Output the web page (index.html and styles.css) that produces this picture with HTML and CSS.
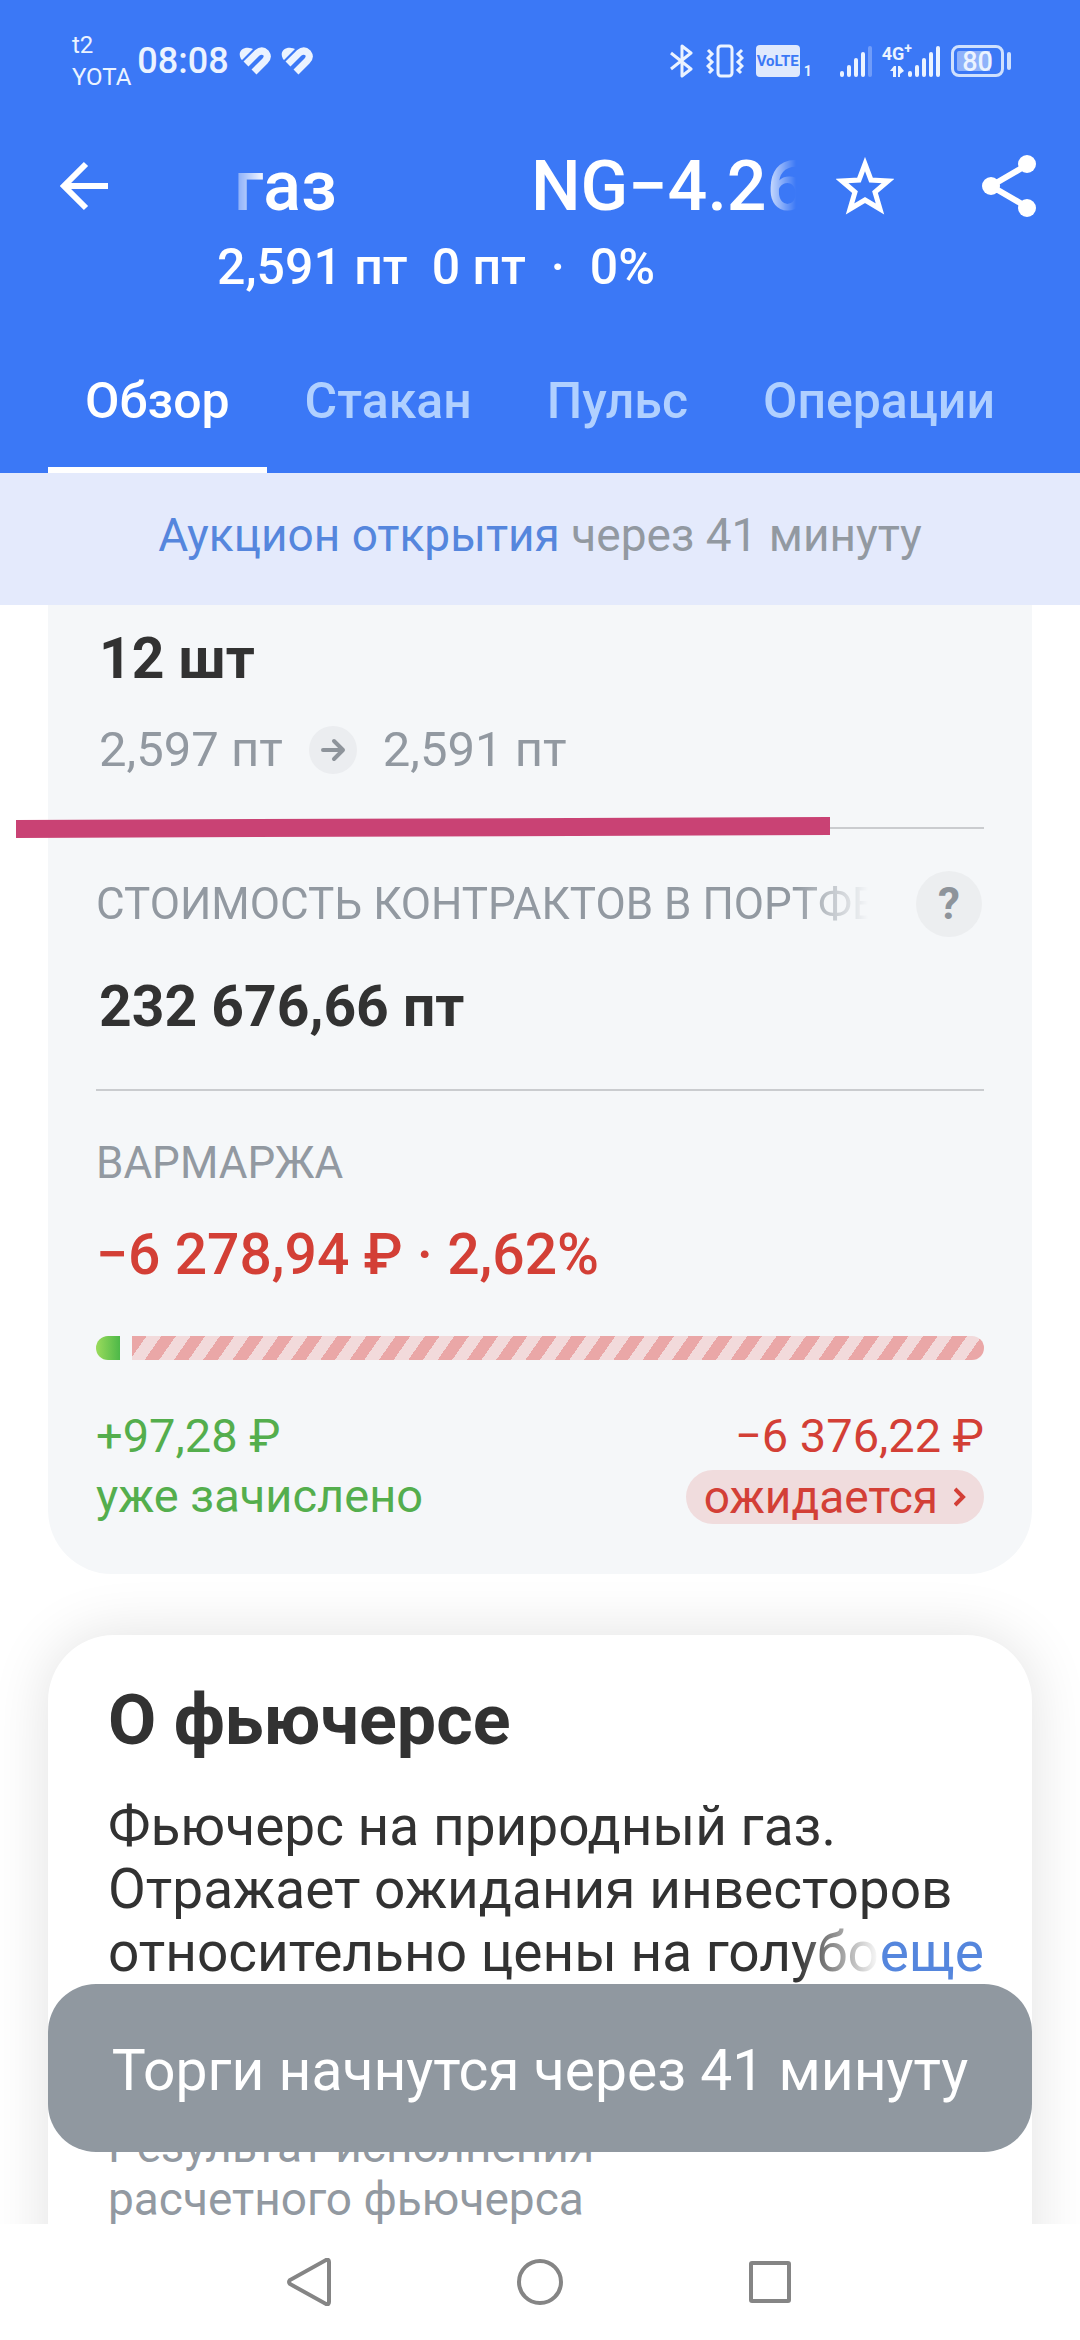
FILE: index.html
```html
<!DOCTYPE html>
<html lang="ru">
<head>
<meta charset="UTF-8">
<meta name="viewport" content="width=device-width, initial-scale=1">
<title>Природный газ NG-4.26</title>
<link rel="stylesheet" href="styles.css">
</head>
<body>
  <header class="header">
    <div class="status">
      <div class="carriers"><span>t2</span><span>YOTA</span></div>
      <span class="clock">08:08</span>
      <svg class="heart" width="32" height="28" viewBox="0 0 32 28">
        <path d="M2 12C-2 5 4 0 10 1Q12 1 14 2L3 13Z" fill="currentColor"/>
        <path d="M7 17L18 6Q23 2 27 6Q30 10 26 14L15 25" fill="none" stroke="currentColor" stroke-width="7"/>
      </svg>
      <svg class="heart" width="32" height="28" viewBox="0 0 32 28">
        <path d="M2 12C-2 5 4 0 10 1Q12 1 14 2L3 13Z" fill="currentColor"/>
        <path d="M7 17L18 6Q23 2 27 6Q30 10 26 14L15 25" fill="none" stroke="currentColor" stroke-width="7"/>
      </svg>
      <div class="indicators">
        <svg width="24" height="34" viewBox="0 0 24 34" fill="none" stroke="currentColor" stroke-width="3" stroke-linejoin="round">
          <path d="M1 9L21 25L12 32V2L21 9L1 25"/>
        </svg>
        <svg width="38" height="34" viewBox="0 0 38 34" fill="none" stroke="currentColor" stroke-width="3">
          <rect x="12" y="2" width="14" height="30" rx="3"/>
          <path d="M2 6L6 10L2 14L6 18L2 22L6 26L3 29M36 6L32 10L36 14L32 18L36 22L32 26L35 29" stroke-width="3"/>
        </svg>
        <span class="volte">VoLTE</span>
        <span class="sim">1</span>
        <svg class="signal" width="34" height="32" viewBox="0 0 34 32" fill="currentColor">
          <rect x="0" y="26" width="4" height="6" rx="2"/>
          <rect x="7" y="20" width="4" height="12" rx="2"/>
          <rect x="14" y="13" width="4" height="19" rx="2"/>
          <rect x="21" y="7" width="4" height="25" rx="2"/>
          <rect x="28" y="1" width="4" height="31" rx="2" opacity="0.3"/>
        </svg>
        <div class="network">
          <span>4G<sup>+</sup></span>
          <svg width="14" height="11" viewBox="0 0 14 11" fill="currentColor">
            <path d="M0 5L4 0H6V11H3V5ZM8 0H10L14 5L10 8V11H8Z"/>
          </svg>
        </div>
        <svg class="bars" width="34" height="32" viewBox="0 0 34 32" fill="currentColor">
          <rect x="0" y="26" width="4" height="6" rx="2"/>
          <rect x="7" y="20" width="4" height="12" rx="2"/>
          <rect x="14" y="13" width="4" height="19" rx="2"/>
          <rect x="21" y="7" width="4" height="25" rx="2"/>
          <rect x="28" y="1" width="4" height="31" rx="2"/>
        </svg>
        <span class="battery">80</span>
      </div>
    </div>

    <div class="toolbar">
      <button type="button" class="icon-button" aria-label="Назад">
        <svg width="48" height="50" viewBox="0 0 48 50" fill="none" stroke="currentColor" stroke-width="6">
          <path d="M26 3L4 25L26 47M4 25H48"/>
        </svg>
      </button>
      <h1 class="name"><span>газ</span><span>NG−4.26</span></h1>
      <button type="button" class="icon-button star" aria-label="В избранное">
        <svg width="58" height="58" viewBox="0 0 58 58" fill="none" stroke="currentColor" stroke-width="5">
          <path d="M29 7L35 23L52 24L39 35L44 52L29 43L14 52L19 35L6 24L23 23Z"/>
        </svg>
      </button>
      <button type="button" class="icon-button share" aria-label="Поделиться">
        <svg width="54" height="62" viewBox="0 0 54 62" fill="currentColor">
          <path d="M45 10L9 31L45 52" fill="none" stroke="currentColor" stroke-width="6"/>
          <circle cx="9" cy="31" r="9"/>
          <circle cx="45" cy="9" r="9"/>
          <circle cx="45" cy="53" r="9"/>
        </svg>
      </button>
    </div>
    <p class="price"><span>2,591 пт</span><span>0 пт&nbsp; · &nbsp;0%</span></p>

    <nav class="tabs">
      <a href="#overview" class="tab tab-active">Обзор</a>
      <a href="#book" class="tab">Стакан</a>
      <a href="#pulse" class="tab">Пульс</a>
      <a href="#operations" class="tab">Операции</a>
    </nav>
  </header>

  <p class="banner"><a href="#auction">Аукцион открытия</a> через 41 минуту</p>

  <main class="content" id="overview">
    <section class="card position">
      <div class="block">
        <p class="value value-bold">12 шт</p>
        <p class="change">
          <span>2,597 пт</span>
          <svg width="48" height="48" viewBox="0 0 48 48">
            <circle cx="24" cy="24" r="24" fill="#ebedf0"/>
            <path d="M14 24H34M25 15L34 24L25 33" fill="none" stroke="#8e949b" stroke-width="4" stroke-linecap="round" stroke-linejoin="round"/>
          </svg>
          <span>2,591 пт</span>
        </p>
        <svg class="marker" viewBox="0 0 814 22" preserveAspectRatio="none" aria-hidden="true">
          <path d="M0 3L814 0V18L0 21Z" fill="#c94274"/>
        </svg>
      </div>

      <div class="block">
        <div class="label-row">
          <h2 class="label label-fade">Стоимость контрактов в портфеле</h2>
          <button type="button" class="help" aria-label="Подсказка">?</button>
        </div>
        <p class="value value-bold">232 676,66 пт</p>
      </div>

      <div class="block">
        <h2 class="label">Вармаржа</h2>
        <p class="value value-loss">−6 278,94 ₽ · 2,62%</p>
        <div class="progress">
          <span class="progress-done"></span>
          <span class="progress-wait"></span>
        </div>
        <div class="totals">
          <p class="credited">+97,28 ₽<br>уже зачислено</p>
          <div class="expected">
            <span>−6 376,22 ₽</span>
            <button type="button" class="pill">ожидается
              <svg width="12" height="20" viewBox="0 0 12 20" fill="none" stroke="currentColor" stroke-width="4">
                <path d="M1 2L9 10L1 18"/>
              </svg>
            </button>
          </div>
        </div>
      </div>
    </section>

    <section class="card about">
      <h2 class="about-title">О фьючерсе</h2>
      <div class="about-text">
        <p>Фьючерс на природный газ. Отражает ожидания инвесторов</p>
        <div class="about-last"><p>относительно цены на голубо</p><a href="#more">еще</a></div>
      </div>
      <p class="result">Результат исполнения расчетного фьючерса</p>
    </section>

    <button type="button" class="trade">Торги начнутся через 41 минуту</button>
  </main>

  <nav class="system">
    <button type="button" class="icon-button" aria-label="Назад">
      <svg width="48" height="48" viewBox="0 0 48 48"><path d="M4 22Q2 24 4 26L40 46Q43 47 43 44V4Q43 1 40 2Z"/></svg>
    </button>
    <button type="button" class="icon-button" aria-label="Домой">
      <svg width="48" height="48" viewBox="0 0 48 48"><circle cx="24" cy="24" r="21"/></svg>
    </button>
    <button type="button" class="icon-button" aria-label="Недавние">
      <svg width="48" height="48" viewBox="0 0 48 48"><rect x="5" y="5" width="38" height="38" rx="1"/></svg>
    </button>
  </nav>
</body>
</html>
```
FILE: styles.css
```css
:root {
  --blue: #3b78f6;
  --link: #5586dd;
  --gray: #9299a1;
  --card: #f5f7f9;
  --dark: #323232;
  --red: #d33f36;
  --green: #54ae4d;
}

* {
  box-sizing: border-box;
}

body {
  margin: 0;
  height: 100vh;
  display: flex;
  flex-direction: column;
  overflow: hidden;
  background: #fff;
  color: var(--dark);
  font-family: Roboto, "Noto Sans", sans-serif;
  font-size: 48px;
}

h1, h2, p {
  margin: 0;
  font-weight: 400;
}

a {
  color: inherit;
  text-decoration: none;
}

button {
  border: none;
  padding: 0;
  background: none;
  color: inherit;
  font: inherit;
  cursor: pointer;
}

svg {
  display: block;
  flex: none;
}

.icon-button {
  flex: none;
}

/* header */
.header {
  flex: none;
  background: var(--blue);
  color: #fff;
}

.status {
  height: 130px;
  padding: 0 70px 8px 72px;
  display: flex;
  align-items: center;
  color: #ebf3ff;
}

.carriers {
  display: flex;
  flex-direction: column;
  font-size: 24px;
  line-height: 32px;
}

.clock {
  margin-left: 6px;
  font-size: 36px;
  font-weight: 500;
}

.heart {
  margin-left: 10px;
}

.indicators {
  margin-left: auto;
  display: flex;
  align-items: center;
  gap: 12px;
}

.volte {
  width: 44px;
  height: 32px;
  border-radius: 4px;
  background: #dfe9fd;
  color: var(--blue);
  font-size: 15px;
  font-weight: 700;
  line-height: 32px;
  text-align: center;
}

.sim {
  align-self: flex-end;
  margin-left: -8px;
  font-size: 14px;
  font-weight: 700;
  line-height: 14px;
}

.signal {
  margin-left: 16px;
}

.network {
  margin-left: -4px;
  display: flex;
  flex-direction: column;
  align-items: center;
  gap: 4px;
  font-size: 18px;
  font-weight: 700;
  line-height: 17px;
}

.network sup {
  font-size: 14px;
  line-height: 1px;
}

.bars {
  margin-left: -16px;
}

.battery {
  position: relative;
  width: 53px;
  height: 32px;
  margin-right: 6px;
  margin-left: -3px;
  border: 3px solid #cfe0fd;
  border-radius: 8px;
  background: linear-gradient(to right, #8fb2fa 80%, transparent 80%) content-box;
  padding: 3px;
  font-size: 27px;
  font-weight: 500;
  line-height: 22px;
  text-align: center;
}

.battery::after {
  content: "";
  position: absolute;
  top: 4px;
  right: -10px;
  width: 4px;
  height: 18px;
  border-radius: 2px;
  background: #cfe0fd;
}

.toolbar {
  height: 112px;
  padding: 0 44px 0 60px;
  display: flex;
  align-items: center;
}

.name {
  flex: 1;
  margin-left: 110px;
  padding-left: 16px;
  display: flex;
  gap: 194px;
  overflow: hidden;
  font-size: 70px;
  font-weight: 500;
  line-height: 84px;
  white-space: nowrap;
  mask-image: linear-gradient(to right, transparent, #000 48px calc(100% - 36px), transparent);
}

.star {
  margin-left: 40px;
}

.share {
  margin-left: 88px;
}

.price {
  padding-left: 217px;
  display: flex;
  gap: 24px;
  font-size: 50px;
  font-weight: 500;
  line-height: 50px;
}

.tabs {
  height: 181px;
  padding: 37px 48px 0;
  display: flex;
  justify-content: space-between;
}

.tab {
  padding: 0 37px;
  border-bottom: 6px solid transparent;
  color: #b0d0ff;
  font-size: 50px;
  font-weight: 500;
  line-height: 144px;
}

.tab-active {
  border-color: #fff;
  color: #fff;
}

.banner {
  flex: none;
  height: 132px;
  background: #e4eafc;
  color: var(--gray);
  font-size: 46px;
  line-height: 124px;
  text-align: center;
}

.banner a {
  color: var(--link);
}

/* cards */
.content {
  position: relative;
  flex: 1;
  min-height: 0;
  padding: 0 48px;
  overflow: hidden;
}

.position {
  padding: 18px 48px 48px;
  border-radius: 0 0 64px 64px;
  background: var(--card);
}

.block {
  position: relative;
}

.block + .block {
  margin-top: 46px;
  padding-top: 42px;
  border-top: 2px solid #cacccf;
}

.value {
  font-size: 57px;
  line-height: 72px;
}

.value-bold {
  font-weight: 700;
}

.value-loss {
  margin-top: 26px;
  color: var(--red);
  font-weight: 500;
}

.change {
  margin-top: 24px;
  display: flex;
  align-items: center;
  gap: 26px;
  color: var(--gray);
  font-size: 49px;
  line-height: 62px;
}

.value-bold,
.change {
  padding-left: 3px;
}

.marker {
  position: absolute;
  left: -80px;
  bottom: -58px;
  z-index: 1;
  width: 814px;
  height: 22px;
}

.label-row {
  margin-bottom: 34px;
  padding-right: 2px;
  display: flex;
  align-items: center;
  justify-content: space-between;
  gap: 48px;
}

.label {
  color: var(--gray);
  font-size: 44px;
  line-height: 60px;
  text-transform: uppercase;
}

.label-fade {
  flex: 1;
  overflow: hidden;
  white-space: nowrap;
  mask-image: linear-gradient(to right, #000 calc(100% - 72px), transparent);
}

.help {
  flex: none;
  width: 66px;
  height: 66px;
  border-radius: 50%;
  background: #eceef0;
  color: #8e949b;
  font-size: 44px;
  font-weight: 700;
}

.progress {
  margin-top: 45px;
  height: 24px;
  display: flex;
  gap: 12px;
}

.progress-done {
  width: 24px;
  border-radius: 12px 0 0 12px;
  background: linear-gradient(to right, #9bdb5c, #4db848);
}

.progress-wait {
  flex: 1;
  border-radius: 0 12px 12px 0;
  background: repeating-linear-gradient(125deg, #eaa7a7 0 12px, #f2dadb 12px 24px);
}

.totals {
  margin-top: 46px;
  display: flex;
  justify-content: space-between;
  font-size: 47px;
  line-height: 60px;
}

.credited {
  color: var(--green);
}

.expected {
  display: flex;
  flex-direction: column;
  align-items: flex-end;
  color: var(--red);
}

.pill {
  margin-top: 4px;
  height: 54px;
  padding: 0 18px;
  display: flex;
  align-items: center;
  gap: 16px;
  border-radius: 27px;
  background: #f0dcdd;
  font-size: 46px;
  line-height: 54px;
}

.about {
  height: 100%;
  margin-top: 61px;
  padding: 45px 48px 0 60px;
  border-radius: 66px;
  background: #fff;
  box-shadow: 0 0 60px rgba(0, 0, 0, 0.12);
}

.about-title {
  font-size: 70px;
  font-weight: 700;
  line-height: 80px;
}

.about-text {
  margin-top: 35px;
  font-size: 55px;
  line-height: 63px;
}

.about-last {
  display: flex;
}

.about-last p {
  flex: 1;
  overflow: hidden;
  white-space: nowrap;
  mask-image: linear-gradient(to right, #000 calc(100% - 84px), transparent);
}

.about-last a {
  color: var(--link);
}

.result {
  width: 500px;
  margin-top: 136px;
  color: var(--gray);
  font-size: 46px;
  line-height: 53px;
}

.trade {
  position: absolute;
  right: 48px;
  bottom: 72px;
  left: 48px;
  height: 168px;
  padding-top: 4px;
  border-radius: 48px;
  background: #9098a0;
  color: #fff;
  font-size: 57px;
}

/* system navigation */
.system {
  flex: none;
  height: 116px;
  padding: 0 286px;
  display: flex;
  align-items: center;
  justify-content: space-between;
  background: #fff;
}

.system svg {
  fill: none;
  stroke: #858585;
  stroke-width: 4;
}
```
